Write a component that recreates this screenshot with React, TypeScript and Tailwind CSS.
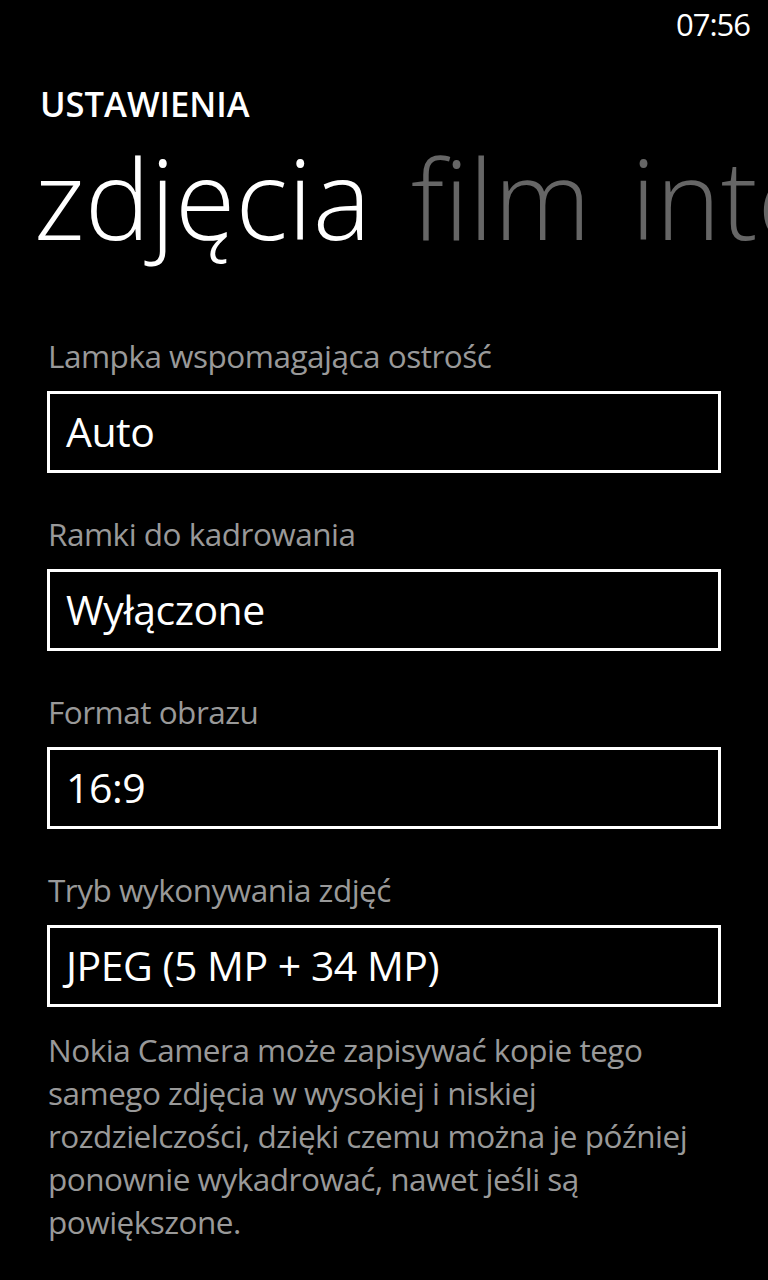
const fields = [
  { label: "Lampka wspomagająca ostrość", value: "Auto" },
  { label: "Ramki do kadrowania", value: "Wyłączone" },
  { label: "Format obrazu", value: "16:9" },
  { label: "Tryb wykonywania zdjęć", value: "JPEG (5 MP + 34 MP)" },
];

export default function App() {
  return (
    <div className="w-[768px] h-[1280px] bg-black text-white overflow-hidden font-['Open_Sans','Noto_Sans',sans-serif]">
      {/* status bar */}
      <div className="h-[52px] flex justify-end items-start pr-[18px] pt-[4px]">
        <span className="text-[31px] leading-[40px] tracking-[-1px]">07:56</span>
      </div>

      <div className="pl-[40px] pt-[32px]">
        <h2 className="text-[34.5px] leading-[40px] font-semibold">USTAWIENIA</h2>
      </div>

      {/* pivot headers, the last one runs off the right edge */}
      <div className="flex gap-[40px] pl-[34px] mt-[13px] whitespace-nowrap text-[110px] leading-[120px] font-light">
        <span className="text-white">zdjęcia</span>
        <span className="text-[#666666]">film</span>
        <span className="text-[#666666]">interfejs</span>
      </div>

      <div className="px-[47px] pt-[79px] flex flex-col">
        <div className="flex flex-col gap-[41px]">
          {fields.map((f) => (
            <div key={f.label} className="flex flex-col">
              <label className="text-[#999999] text-[31.5px] leading-[40px] tracking-[-0.5px] pl-[1px]">{f.label}</label>
              <div className="mt-[15px] h-[82px] border-[3px] border-white flex items-center px-[16px]">
                <span className="text-[41px] tracking-[-0.5px]">{f.value}</span>
              </div>
            </div>
          ))}
        </div>
        <p className="text-[#999999] text-[31.5px] leading-[43px] tracking-[-0.5px] pl-[1px] mt-[21px]">
          Nokia Camera może zapisywać kopie tego samego zdjęcia w wysokiej i niskiej rozdzielczości, dzięki czemu można je później ponownie wykadrować, nawet jeśli są powiększone.
        </p>
      </div>
    </div>
  );
}
